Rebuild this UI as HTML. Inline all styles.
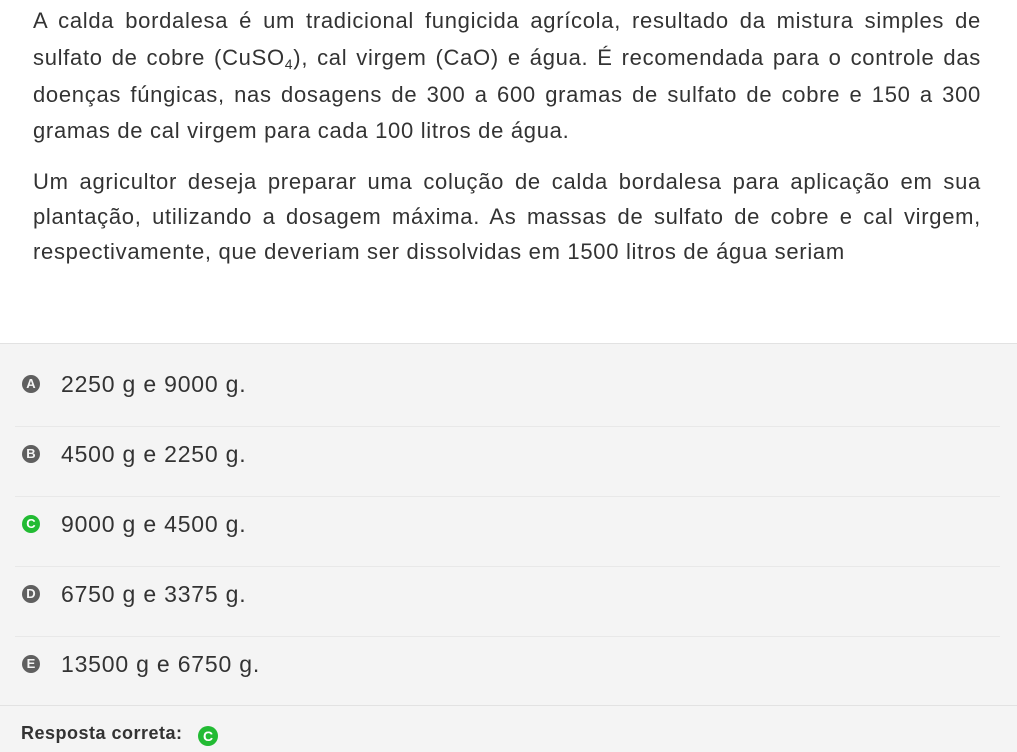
<!DOCTYPE html>
<html><head><meta charset="utf-8"><style>
body{margin:0;width:1017px;height:751px;background:#fff;font-family:"Liberation Sans",sans-serif;color:#333;overflow:hidden;position:relative}
.p{position:absolute;left:33px;width:948px;font-size:22px;letter-spacing:0.7px}
.l{height:36px;line-height:36px;text-align:justify;text-align-last:justify;white-space:nowrap}
.l.last{text-align-last:left}
sub{font-size:14px;vertical-align:-4px;line-height:0}
.gray{position:absolute;left:0;top:343px;width:1017px;height:408px;background:#f4f4f4;border-top:1px solid #e2e2e2}
.opt{position:absolute;left:15px;width:985px;height:70px}
.opt.sep{border-bottom:1px solid #e8e8e8}
.c{position:absolute;left:7px;top:19px;width:18px;height:18px;border-radius:50%;background:#5f5f5f;color:#f4f4f4;font-weight:bold;font-size:13px;line-height:18px;text-align:center;letter-spacing:0}
.c.g{background:#22bb33;color:#fff}
.t{position:absolute;left:46px;top:-7px;line-height:70px;font-size:23px;color:#333;letter-spacing:0.8px}
.foot{position:absolute;left:0;top:705px;width:1017px;border-top:1px solid #e2e2e2;height:46px}
</style></head><body>
<div class="p" style="top:3px">
<div class="l">A calda bordalesa é um tradicional fungicida agrícola, resultado da mistura simples de</div>
<div class="l" style="height:38px;line-height:38px">sulfato de cobre (CuSO<sub>4</sub>), cal virgem (CaO) e água. É recomendada para o controle das</div>
<div class="l">doenças fúngicas, nas dosagens de 300 a 600 gramas de sulfato de cobre e 150 a 300</div>
<div class="l last">gramas de cal virgem para cada 100 litros de água.</div>
</div>
<div class="p" style="top:164px">
<div class="l" style="height:35px;line-height:35px">Um agricultor deseja preparar uma colução de calda bordalesa para aplicação em sua</div>
<div class="l" style="height:35px;line-height:35px">plantação, utilizando a dosagem máxima. As massas de sulfato de cobre e cal virgem,</div>
<div class="l last" style="height:35px;line-height:35px">respectivamente, que deveriam ser dissolvidas em 1500 litros de água seriam</div>
</div>
<div class="gray">
<div class="opt sep" style="top:12px"><div class="c">A</div><div class="t">2250 g e 9000 g.</div></div>
<div class="opt sep" style="top:82px"><div class="c">B</div><div class="t">4500 g e 2250 g.</div></div>
<div class="opt sep" style="top:152px"><div class="c g">C</div><div class="t">9000 g e 4500 g.</div></div>
<div class="opt sep" style="top:222px"><div class="c">D</div><div class="t">6750 g e 3375 g.</div></div>
<div class="opt" style="top:292px"><div class="c">E</div><div class="t">13500 g e 6750 g.</div></div>
</div>
<div class="foot">
<div style="position:absolute;left:21px;top:17px;font-size:18px;font-weight:bold;color:#333;letter-spacing:0.5px">Resposta correta:</div>
<div class="c g" style="left:198px;top:20px;width:20px;height:20px;line-height:20px;font-size:14px">C</div>
</div>
</body></html>
